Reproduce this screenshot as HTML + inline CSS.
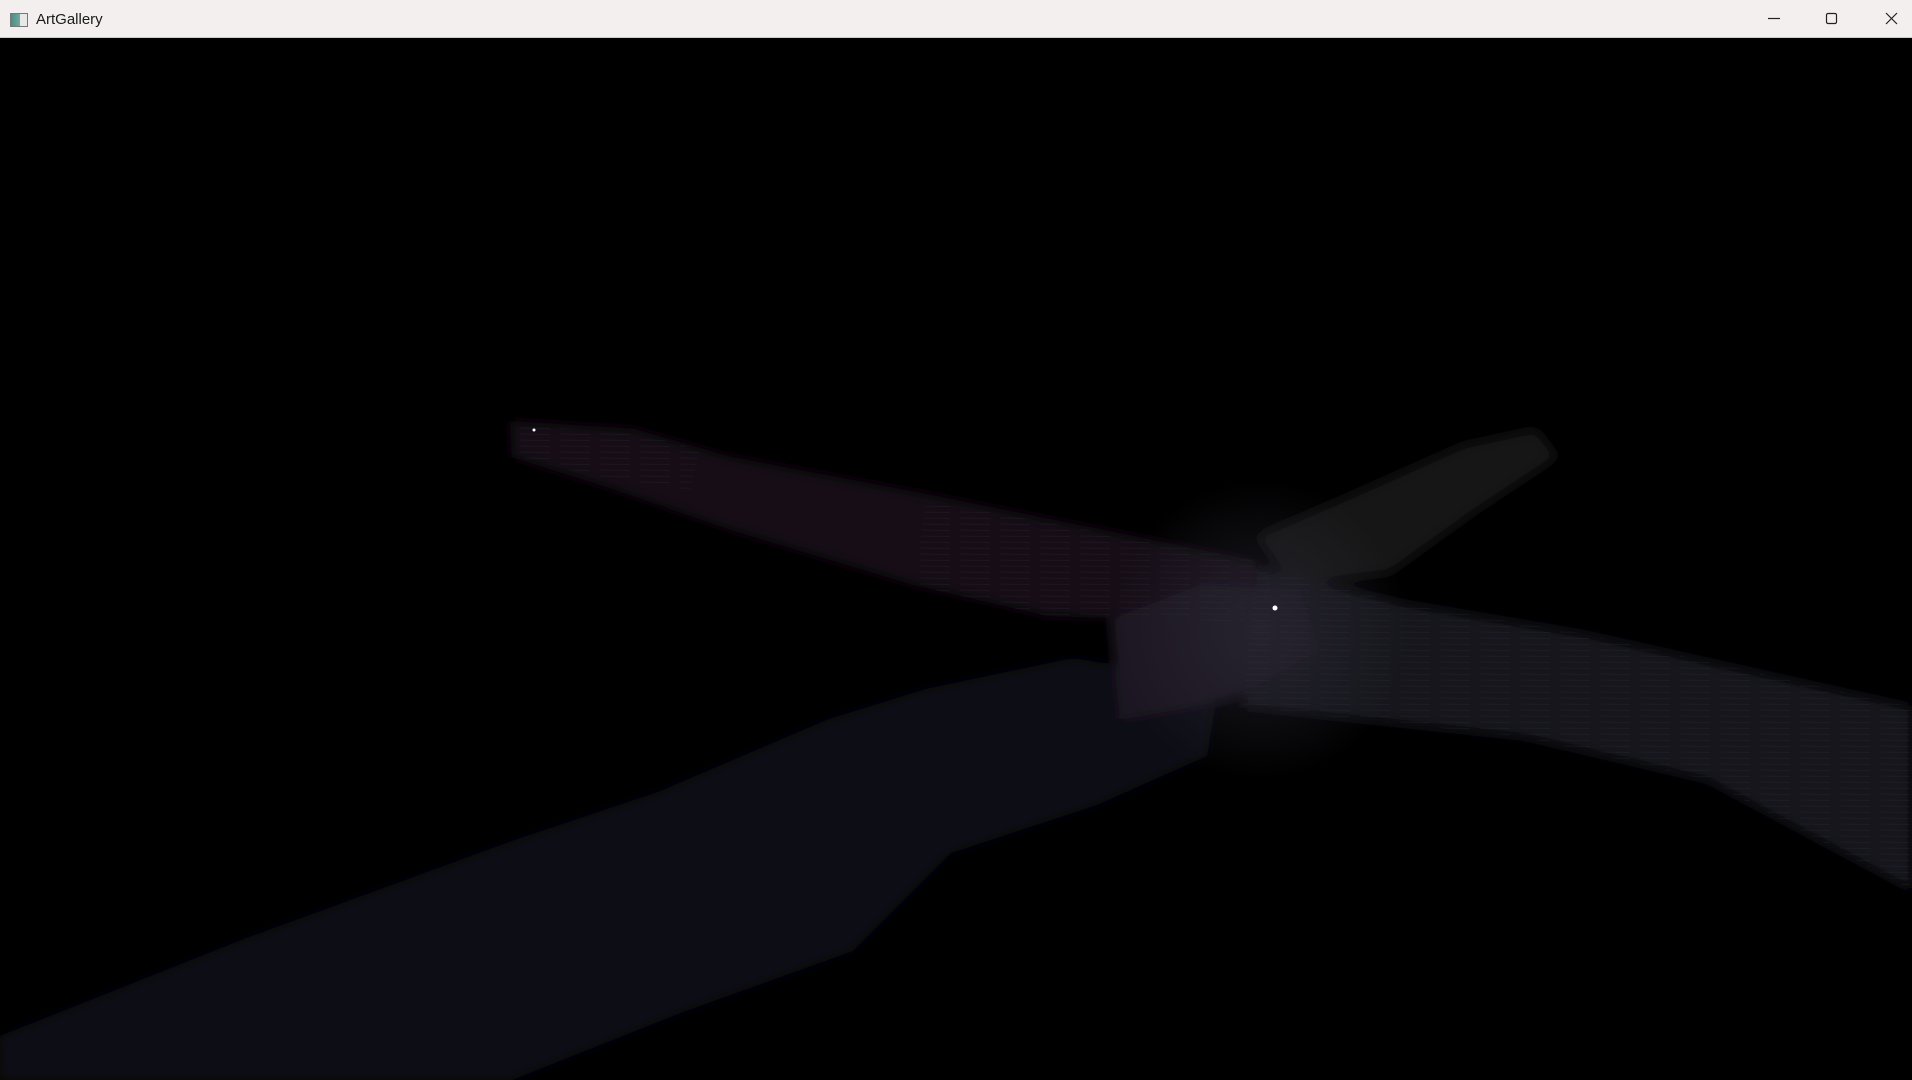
<!DOCTYPE html>
<html><head><meta charset="utf-8"><style>
html,body{margin:0;padding:0;width:1912px;height:1080px;overflow:hidden;background:#000;}
.tb{position:absolute;left:0;top:0;width:1912px;height:37px;background:#f3efef;border-bottom:1px solid #cfcaca;}
.tt{position:absolute;left:36px;top:11px;font:15px "Liberation Sans",sans-serif;color:#1a1a1a;}
.ic{position:absolute;left:10px;top:13px;width:16px;height:12px;border:1px solid #777;background:linear-gradient(90deg,#4d8c86 0,#6fa9a0 55%,#e8e8e8 56%);}
svg{position:absolute;left:0;top:38px;}
</style></head><body>
<div class="tb"><div class="ic"></div><div class="tt">ArtGallery</div>
<svg style="top:0;left:1740px" width="172" height="37" viewBox="0 0 172 37">
<line x1="28" y1="18.5" x2="40" y2="18.5" stroke="#222" stroke-width="1.2"/>
<rect x="86.5" y="13.5" width="10" height="10" rx="1.5" fill="none" stroke="#222" stroke-width="1.2"/>
<path d="M146 13 L157 24 M157 13 L146 24" stroke="#222" stroke-width="1.2"/>
</svg></div>
<svg width="1912" height="1042" viewBox="0 38 1912 1042">
<defs>
<filter id="b" x="-10%" y="-10%" width="120%" height="120%"><feGaussianBlur stdDeviation="6"/></filter>
<pattern id="st" width="40" height="6" patternUnits="userSpaceOnUse"><line x1="0" y1="2" x2="30" y2="2.5" stroke="#3c3a48" stroke-width="0.8"/></pattern>
<radialGradient id="hub" cx="1260" cy="630" r="150" gradientUnits="userSpaceOnUse"><stop offset="0" stop-color="#2a2834" stop-opacity="0.7"/><stop offset="1" stop-color="#2a2834" stop-opacity="0"/></radialGradient>
</defs>
<g filter="url(#b)">
<polygon fill="#0e0d12" points="0,1036 244,939 512,841 658,792 829,719 926,689 1073,658 1219,683 1207,756 1097,805 951,853 853,951 683,1012 512,1080 0,1080"/>
<polygon fill="#121117" points="510,421 634,429 731,457 926,494 1256,561 1243,622 1048,616 914,585 731,530 610,488 512,457"/>
<polygon fill="#141319" points="1256,536 1353,494 1463,445 1536,429 1558,457 1475,512 1390,573 1292,585"/>
<polygon fill="#18171f" points="1256,567 1402,603 1585,634 1912,707 1912,890 1707,780 1524,737 1243,707"/>
<polygon fill="#1a1921" points="1110,620 1200,585 1300,590 1320,650 1230,700 1120,720"/>
</g>
<rect x="0" y="400" width="1912" height="680" fill="url(#hub)"/>
<g opacity="0.25">
<polygon fill="url(#st)" points="1256,567 1402,603 1585,634 1912,707 1912,890 1707,780 1524,737 1243,707"/>
<polygon fill="url(#st)" points="926,500 1256,561 1243,622 1048,616 914,585"/>
<polygon fill="url(#st)" points="512,425 634,432 700,450 690,490 610,480 512,455"/>
</g>
<circle cx="1275" cy="608" r="2.5" fill="#fff"/>
<circle cx="534" cy="430" r="1.5" fill="#fff"/>
</svg>
</body></html>
